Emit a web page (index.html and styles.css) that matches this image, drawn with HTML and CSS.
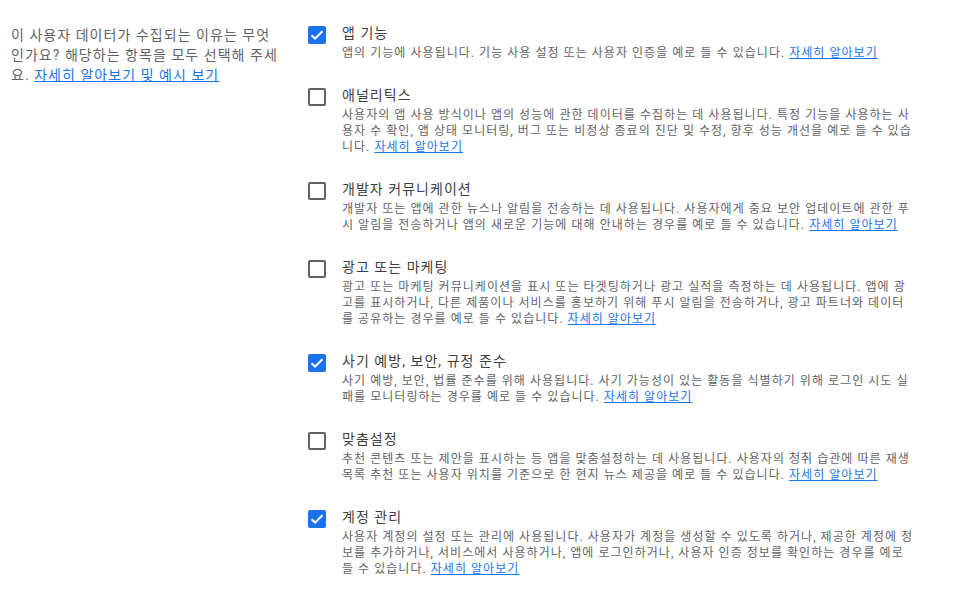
FILE: index.html
```html
<!DOCTYPE html>
<html lang="ko">
<head>
<meta charset="utf-8">
<link rel="stylesheet" href="styles.css">
</head>
<body>
<div class="page">
  <div class="intro">
    이 사용자 데이터가 수집되는 이유는 무엇인가요? 해당하는 항목을 모두 선택해 주세요. <a href="#" class="link">자세히 알아보기 및 예시 보기</a>
  </div>
  <div class="list">
    <div class="item">
      <span class="cb checked"><svg viewBox="0 0 18 18" width="18" height="18"><rect x="0" y="0" width="18" height="18" rx="2" fill="#1a73e8"/><path d="M3.6 9.2l3.5 3.4 7.3-7.3" fill="none" stroke="#fff" stroke-width="2"/></svg></span>
      <div class="body">
        <div class="title">앱 기능</div>
        <div class="desc">앱의 기능에 사용됩니다. 기능 사용 설정 또는 사용자 인증을 예로 들 수 있습니다. <a href="#" class="link">자세히 알아보기</a></div>
      </div>
    </div>
    <div class="item">
      <span class="cb"><svg viewBox="0 0 18 18" width="18" height="18"><rect x="1" y="1" width="16" height="16" rx="1" fill="none" stroke="#5f6368" stroke-width="2"/></svg></span>
      <div class="body">
        <div class="title">애널리틱스</div>
        <div class="desc">사용자의 앱 사용 방식이나 앱의 성능에 관한 데이터를 수집하는 데 사용됩니다. 특정 기능을 사용하는 사용자 수 확인, 앱 상태 모니터링, 버그 또는 비정상 종료의 진단 및 수정, 향후 성능 개선을 예로 들 수 있습니다. <a href="#" class="link">자세히 알아보기</a></div>
      </div>
    </div>
    <div class="item">
      <span class="cb"><svg viewBox="0 0 18 18" width="18" height="18"><rect x="1" y="1" width="16" height="16" rx="1" fill="none" stroke="#5f6368" stroke-width="2"/></svg></span>
      <div class="body">
        <div class="title">개발자 커뮤니케이션</div>
        <div class="desc">개발자 또는 앱에 관한 뉴스나 알림을 전송하는 데 사용됩니다. 사용자에게 중요 보안 업데이트에 관한 푸시 알림을 전송하거나 앱의 새로운 기능에 대해 안내하는 경우를 예로 들 수 있습니다. <a href="#" class="link">자세히 알아보기</a></div>
      </div>
    </div>
    <div class="item">
      <span class="cb"><svg viewBox="0 0 18 18" width="18" height="18"><rect x="1" y="1" width="16" height="16" rx="1" fill="none" stroke="#5f6368" stroke-width="2"/></svg></span>
      <div class="body">
        <div class="title">광고 또는 마케팅</div>
        <div class="desc">광고 또는 마케팅 커뮤니케이션을 표시 또는 타겟팅하거나 광고 실적을 측정하는 데 사용됩니다. 앱에 광고를 표시하거나, 다른 제품이나 서비스를 홍보하기 위해 푸시 알림을 전송하거나, 광고 파트너와 데이터를 공유하는 경우를 예로 들 수 있습니다. <a href="#" class="link">자세히 알아보기</a></div>
      </div>
    </div>
    <div class="item">
      <span class="cb checked"><svg viewBox="0 0 18 18" width="18" height="18"><rect x="0" y="0" width="18" height="18" rx="2" fill="#1a73e8"/><path d="M3.6 9.2l3.5 3.4 7.3-7.3" fill="none" stroke="#fff" stroke-width="2"/></svg></span>
      <div class="body">
        <div class="title">사기 예방, 보안, 규정 준수</div>
        <div class="desc">사기 예방, 보안, 법률 준수를 위해 사용됩니다. 사기 가능성이 있는 활동을 식별하기 위해 로그인 시도 실패를 모니터링하는 경우를 예로 들 수 있습니다. <a href="#" class="link">자세히 알아보기</a></div>
      </div>
    </div>
    <div class="item">
      <span class="cb"><svg viewBox="0 0 18 18" width="18" height="18"><rect x="1" y="1" width="16" height="16" rx="1" fill="none" stroke="#5f6368" stroke-width="2"/></svg></span>
      <div class="body">
        <div class="title">맞춤설정</div>
        <div class="desc">추천 콘텐츠 또는 제안을 표시하는 등 앱을 맞춤설정하는 데 사용됩니다. 사용자의 청취 습관에 따른 재생목록 추천 또는 사용자 위치를 기준으로 한 현지 뉴스 제공을 예로 들 수 있습니다. <a href="#" class="link">자세히 알아보기</a></div>
      </div>
    </div>
    <div class="item">
      <span class="cb checked"><svg viewBox="0 0 18 18" width="18" height="18"><rect x="0" y="0" width="18" height="18" rx="2" fill="#1a73e8"/><path d="M3.6 9.2l3.5 3.4 7.3-7.3" fill="none" stroke="#fff" stroke-width="2"/></svg></span>
      <div class="body">
        <div class="title">계정 관리</div>
        <div class="desc">사용자 계정의 설정 또는 관리에 사용됩니다. 사용자가 계정을 생성할 수 있도록 하거나, 제공한 계정에 정보를 추가하거나, 서비스에서 사용하거나, 앱에 로그인하거나, 사용자 인증 정보를 확인하는 경우를 예로 들 수 있습니다. <a href="#" class="link">자세히 알아보기</a></div>
      </div>
    </div>
  </div>
</div>
</body>
</html>
```
FILE: styles.css
```css
html, body {
  margin: 0;
  padding: 0;
  background: #fff;
}
body {
  font-family: Roboto, "Noto Sans CJK KR", sans-serif;
  color: #5f6368;
  letter-spacing: 0.065em;
}
.page {
  display: flex;
  gap: 29px;
  padding: 23px 0 0 11px;
}
.intro {
  width: 268px;
  flex: none;
  font-size: 14px;
  line-height: 20px;
  margin-top: 2px;
  color: #5f6368;
}
.link {
  color: #1a73e8;
  text-decoration: underline;
}
.list {
  width: 606px;
  flex: none;
  display: flex;
  flex-direction: column;
  gap: 24px;
}
.item {
  display: flex;
  gap: 16px;
  align-items: flex-start;
}
.cb {
  flex: none;
  width: 18px;
  height: 18px;
  margin-top: 3px;
  display: block;
}
.cb svg {
  display: block;
}
.body {
  flex: 1;
  min-width: 0;
}
.title {
  font-size: 14px;
  line-height: 20px;
  color: #3c4043;
  margin-bottom: 2px;
}
.desc {
  font-size: 12px;
  line-height: 16px;
  color: #5f6368;
}
```
